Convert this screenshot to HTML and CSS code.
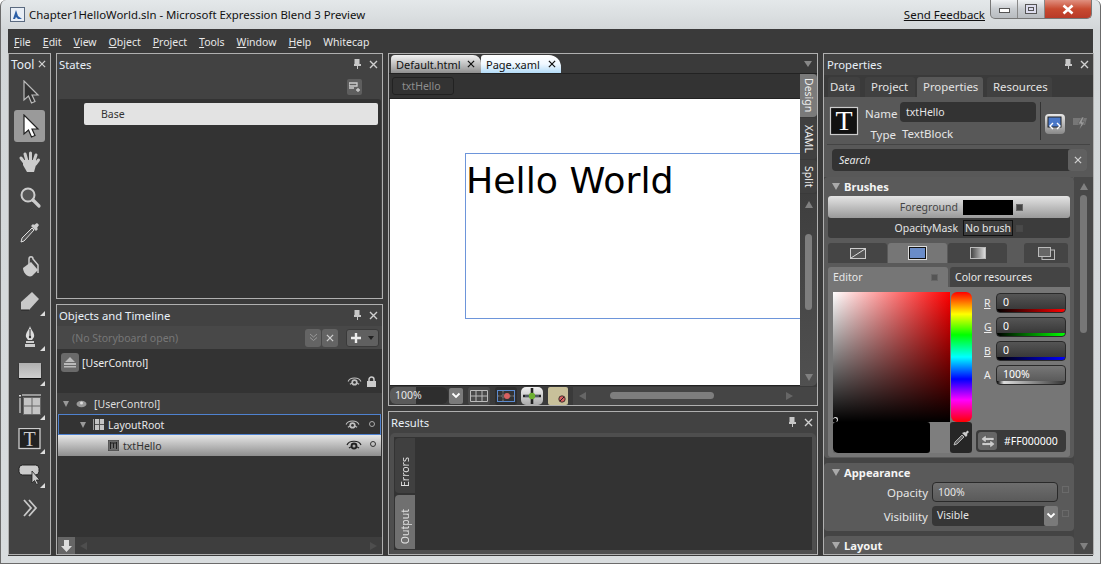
FILE: index.html
```html
<!DOCTYPE html>
<html lang="en">
<head>
    <meta charset="UTF-8">
    <title>Chapter1HelloWorld.sln - Microsoft Expression Blend 3 Preview</title>
    <link rel="stylesheet" href="styles.css">
</head>
<body>
    <svg class="defs" width="0" height="0">
        <symbol id="pin" viewBox="0 0 10 11"><path d="M2.5 0h5v5h1.5v2h-3v3h-1v-3h-3v-2h.5z" fill="#c8c8c8"/></symbol>
        <symbol id="close" viewBox="0 0 9 9"><path d="M1 1l7 7M8 1l-7 7" stroke="#d0d0d0" stroke-width="1.4" fill="none"/></symbol>
        <symbol id="eye" viewBox="0 0 16 12"><path d="M1 6c2-5 12-5 14 0M3 9c2-2 8-2 10 0" stroke="#c0c0c0" stroke-width="1.2" fill="none"/><circle cx="8" cy="7" r="3.4" fill="#c0c0c0"/><circle cx="8" cy="7" r="1.5" fill="#333"/></symbol>
        <symbol id="chev" viewBox="0 0 10 8"><path d="M1.5 1.5l3.5 3.5 3.5-3.5" stroke="#fff" stroke-width="1.8" fill="none"/></symbol>
    </svg>

    <div class="window">
        <!-- title bar -->
        <div class="titlebar">
            <svg class="app-icon" viewBox="0 0 15 15"><rect x=".5" y=".5" width="14" height="14" fill="#e8eef6" stroke="#5a6a80"/><path d="M3 12l3-9 2 6 4 3h-4l-2-2-1 2z" fill="#2a5fa8"/></svg>
            <span class="title">Chapter1HelloWorld.sln - Microsoft Expression Blend 3 Preview</span>
            <span class="feedback">Send Feedback</span>
            <div class="win-btns">
                <div class="win-btn"><span class="glyph-min"></span></div>
                <div class="win-btn"><span class="glyph-max"></span></div>
                <div class="win-btn win-close"><svg width="14" height="11" viewBox="0 0 14 11"><path d="M2.5 1.5l9 8M11.5 1.5l-9 8" stroke="#fff" stroke-width="2.6"/></svg></div>
            </div>
        </div>

        <div class="client">
            <!-- menu -->
            <div class="menubar">
                <span><u>F</u>ile</span>
                <span><u>E</u>dit</span>
                <span><u>V</u>iew</span>
                <span><u>O</u>bject</span>
                <span><u>P</u>roject</span>
                <span><u>T</u>ools</span>
                <span><u>W</u>indow</span>
                <span><u>H</u>elp</span>
                <span>Whitecap</span>
            </div>

            <div class="workspace">
                <!-- toolbox -->
                <div class="panel tool-panel">
                    <div class="tool-head">Tool <svg class="tool-x"><use href="#close"/></svg></div>
                    <div class="tool-btn">
                        <svg viewBox="0 1 24 24"><path d="M6 2v19l4.500-4 3 7 3.500-1.500-3-6.500h6z" fill="#333" stroke="#bbb" stroke-width="1.200"/></svg>
                    </div>
                    <div class="tool-btn tool-active">
                        <svg viewBox="0 1 24 24"><path d="M6 2v19l4.500-4 3 7 3.500-1.500-3-6.500h6z" fill="#fff" stroke="#222" stroke-width="1.200"/></svg>
                    </div>
                    <div class="tool-btn">
                        <svg viewBox="0 0 24 24"><path d="M6 12l-3-4M9 11l-2-7M12.500 10V3M16 11l2-6M17.500 14l3-4" stroke="#ccc" stroke-width="3" stroke-linecap="round" fill="none"/><path d="M5 10h13v5l-2 7H9l-4-7z" fill="#ccc"/></svg>
                    </div>
                    <div class="tool-btn">
                        <svg viewBox="0 0 24 24"><circle cx="10" cy="10" r="6.500" fill="#555" stroke="#ccc" stroke-width="2"/><path d="M15 15l6 6" stroke="#ccc" stroke-width="3.200" stroke-linecap="round"/></svg>
                    </div>
                    <div class="tool-btn">
                        <svg viewBox="0 0 24 24"><path d="M3 22l1-4L14 8l2 2L6 21z" fill="#555" stroke="#ddd"/><path d="M13 6l5 5 2-2-1-1 2-3-2-2-3 2-1-1z" fill="#ccc"/></svg>
                    </div>
                    <div class="tool-btn">
                        <svg viewBox="0 0 24 24"><path d="M5 13l8-6 7 8-6 6c-4 2-9-3-9-8z" fill="#ccc"/><path d="M11 10V4c0-3 4-3 4 0l5 6v8" stroke="#ccc" stroke-width="1.500" fill="none"/></svg>
                    </div>
                    <div class="tool-btn">
                        <svg viewBox="0 0 24 24"><path d="M14 2l7 7-10 11H3v-8z" fill="#c8c8c8"/><path d="M3 20h8" stroke="#222" stroke-width="1"/></svg>
                        <span class="corner"></span>
                    </div>
                    <div class="tool-btn">
                        <svg viewBox="0 0 24 24"><path d="M12 1c-1 4-5 7-4 11l2 3h4l2-3c1-4-3-7-4-11z" fill="#ddd"/><path d="M12 4v7" stroke="#333"/><circle cx="12" cy="12" r="1.200" fill="#333"/><path d="M8 16h8v2H8zM7 19h10v3H7z" fill="#ccc"/></svg>
                        <span class="corner"></span>
                    </div>
                    <div class="tool-btn">
                        <div class="rect-tool"></div>
                        <span class="corner"></span>
                    </div>
                    <div class="tool-btn tool-short">
                        <svg viewBox="0 2 24 24"><rect x="5" y="5" width="18" height="18" fill="#666"/><path d="M6 6h7.500v7.500H6zM14.500 6H22v7.500h-7.500zM6 14.500h7.500V22H6zM14.500 14.500H22V22h-7.500z" fill="#c4c4c4"/><path d="M4 3h19" stroke="#999" stroke-width="2"/><path d="M2 3v1.500" stroke="#ddd" stroke-width="2"/><path d="M2 6v15" stroke="#999" stroke-width="2"/></svg>
                        <span class="corner"></span>
                    </div>
                    <div class="tool-btn tool-short">
                        <svg viewBox="0 2 24 24"><rect x="1" y="2.500" width="21" height="20" fill="#222" stroke="#ccc" stroke-width="1.300"/><text x="11.500" y="19.500" text-anchor="middle" class="t-glyph">T</text></svg>
                        <span class="corner"></span>
                    </div>
                    <div class="tool-btn tool-short">
                        <svg viewBox="0 0 24 24"><rect x="1" y="3" width="20" height="10" rx="3.500" fill="#ccc" stroke="#222"/><path d="M14 9v12l2.500-2.500 2 4 1.800-1-2-3.500h3.500z" fill="#ccc" stroke="#222" stroke-width=".8"/></svg>
                        <span class="corner"></span>
                    </div>
                    <div class="tool-btn tool-short">
                        <svg viewBox="0 0 24 24"><path d="M6 4l7 8-7 8M11 4l7 8-7 8" stroke="#c8c8c8" stroke-width="1.800" fill="none"/></svg>
                    </div>
                </div>

                <div class="col-left">
                    <!-- states -->
                    <div class="panel states">
                        <div class="panel-head"><span class="head-text">States</span><svg class="pin"><use href="#pin"/></svg><svg class="x"><use href="#close"/></svg></div>
                        <div class="states-tools">
                            <div class="add-state"><svg width="11" height="11" viewBox="0 0 11 11"><path d="M0 1h8v3H0zM0 6h5M7 8h4M9 6v4" fill="none" stroke="#ccc" stroke-width="1.300"/></svg></div>
                        </div>
                        <div class="states-list">
                            <div class="state-row">Base</div>
                        </div>
                    </div>

                    <!-- objects and timeline -->
                    <div class="panel objects">
                        <div class="panel-head"><span class="head-text">Objects and Timeline</span><svg class="pin"><use href="#pin"/></svg><svg class="x"><use href="#close"/></svg></div>
                        <div class="storyboard">
                            <span class="sb-label">(No Storyboard open)</span>
                            <div class="sb-btn"><svg width="9" height="9" viewBox="0 0 9 9"><path d="M1 1l3.500 3 3.500-3M1 4.500l3.500 3 3.500-3" fill="none" stroke="#999"/></svg></div>
                            <div class="sb-btn"><svg width="8" height="8"><use href="#close"/></svg></div>
                            <div class="sb-add">
                                <svg width="10" height="10" viewBox="0 0 10 10"><path d="M5 0v10M0 5h10" stroke="#eee" stroke-width="2.400"/></svg>
                                <span class="sb-caret"></span>
                            </div>
                        </div>
                        <div class="scope">
                            <div class="scope-main">
                                <div class="scope-btn"><svg width="12" height="11" viewBox="0 0 12 11"><path d="M6 0l5 5H1zM0 6h12v2H0zM0 9h12v1.500H0z" fill="#bbb"/></svg></div>
                                <span>[UserControl]</span>
                            </div>
                            <div class="scope-icons">
                                <svg width="15" height="11"><use href="#eye"/></svg>
                                <svg width="11" height="11" viewBox="0 0 11 11"><path d="M3 5V3.500a2.500 2.500 0 0 1 5 0V5" stroke="#ccc" stroke-width="1.500" fill="none"/><rect x="1" y="5" width="9" height="6" fill="#ccc"/></svg>
                            </div>
                        </div>
                        <div class="tree">
                            <div class="tree-row tree-root">
                                <span class="tri"></span>
                                <svg class="root-ico" width="11" height="8" viewBox="0 0 11 8"><ellipse cx="5.500" cy="4" rx="5" ry="3.200" fill="#999"/><circle cx="5.500" cy="3" r="1.500" fill="#ddd"/></svg>
                                <span>[UserControl]</span>
                            </div>
                            <div class="tree-row tree-layout">
                                <span class="tri"></span>
                                <svg class="node-ico" width="11" height="11" viewBox="0 0 11 11"><rect x="2" width="9" height="11" fill="#c4c4c4"/><path d="M6.500 0v11M2 5.500h9" stroke="#555"/><path d="M.5 0v11" stroke="#999"/></svg>
                                <span>LayoutRoot</span>
                                <svg class="row-eye" width="15" height="11"><use href="#eye"/></svg>
                                <span class="dot"></span>
                            </div>
                            <div class="tree-row tree-sel">
                                <svg class="leaf-ico" width="11" height="11" viewBox="0 0 11 11"><rect width="11" height="11" fill="#6a6a6a" stroke="#444"/><path d="M3 3h5M5.500 3v5M2.500 2v7M8.500 2v7" stroke="#222"/></svg>
                                <span>txtHello</span>
                                <svg class="row-eye big-eye" width="16" height="12" viewBox="0 0 16 12"><path d="M1 6c2-5 12-5 14 0M3 9c2-2 8-2 10 0" stroke="#222" stroke-width="1.200" fill="none"/><circle cx="8" cy="7" r="3.400" fill="#222"/><circle cx="8" cy="7" r="1.500" fill="#aaa"/></svg>
                                <span class="dot dot-dark"></span>
                            </div>
                        </div>
                        <div class="obj-bottom">
                            <div class="down-btn"><svg width="11" height="12" viewBox="0 0 11 12"><path d="M3 0h5v6h3l-5.500 6L0 6h3z" fill="#ddd"/></svg></div>
                            <span class="arrow-l dim"></span>
                            <span class="grow"></span>
                            <span class="arrow-r dim"></span>
                        </div>
                    </div>
                </div>

                <div class="col-center">
                    <!-- document -->
                    <div class="panel doc">
                        <div class="doc-tabs">
                            <div class="doc-tab tab-plain">Default.html <svg><use href="#close"/></svg></div>
                            <div class="doc-tab tab-live">Page.xaml <svg><use href="#close"/></svg></div>
                            <span class="grow"></span>
                            <span class="tab-menu"></span>
                        </div>
                        <div class="doc-body">
                            <div class="doc-left">
                                <div class="crumbs"><span class="crumb">txtHello</span></div>
                                <div class="canvas">
                                    <div class="selection">Hello World</div>
                                </div>
                            </div>
                            <div class="view-strip">
                                <div class="view-tab view-on design"><span>Design</span></div>
                                <div class="view-tab xaml"><span>XAML</span></div>
                                <div class="view-tab split"><span>Split</span></div>
                                <div class="vscroll">
                                    <span class="arrow-u"></span>
                                    <span class="vthumb"></span>
                                    <span class="arrow-d"></span>
                                </div>
                            </div>
                        </div>
                        <div class="doc-status">
                            <div class="zoom-box">100%</div>
                            <div class="combo-btn"><svg width="10" height="8"><use href="#chev"/></svg></div>
                            <div class="st-btn"><svg width="18" height="12" viewBox="0 0 18 12"><path d="M.5.500h17v11H.5zM6 .5v11M12 .5v11M.5 6h17" fill="none" stroke="#bbb"/></svg></div>
                            <div class="st-btn st-second"><svg width="18" height="12" viewBox="0 0 18 12"><rect x=".5" y=".5" width="17" height="11" fill="#333" stroke="#5a8ad0"/><path d="M6 .5v11M.5 6h17" stroke="#888" stroke-dasharray="2 1"/><circle cx="10" cy="6" r="3" fill="#d86060"/></svg></div>
                            <div class="st-btn st-snap"><svg width="18" height="16" viewBox="0 0 18 16"><path d="M9 0v16M0 8h18" stroke="#222" stroke-width="2.600"/><path d="M2 8h14" stroke="#8090a8"/><circle cx="9" cy="8" r="3.200" fill="#6cb030"/></svg></div>
                            <div class="st-btn st-tan"><svg class="no-ico" width="8" height="8" viewBox="0 0 8 8"><circle cx="4" cy="4" r="3.200" fill="#d86060" stroke="#222" stroke-width=".8"/><path d="M2 6l4-4" stroke="#222"/></svg></div>
                            <div class="hscroll">
                                <span class="arrow-l"></span>
                                <span class="hthumb"></span>
                                <span class="grow"></span>
                                <span class="arrow-r"></span>
                            </div>
                        </div>
                    </div>

                    <!-- results -->
                    <div class="panel results">
                        <div class="panel-head"><span class="head-text">Results</span><svg class="pin"><use href="#pin"/></svg><svg class="x"><use href="#close"/></svg></div>
                        <div class="results-frame">
                            <div class="results-inner">
                                <div class="res-tabs">
                                    <div class="res-tab"><span>Errors</span></div>
                                    <div class="res-tab res-on"><span>Output</span></div>
                                </div>
                            </div>
                        </div>
                    </div>
                </div>

                <!-- properties -->
                <div class="panel props">
                    <div class="panel-head"><span class="head-text">Properties</span><svg class="pin"><use href="#pin"/></svg><svg class="x"><use href="#close"/></svg></div>
                    <div class="prop-tabs">
                        <span class="prop-tab tab-data">Data</span>
                        <span class="prop-tab tab-project">Project</span>
                        <span class="prop-tab prop-on">Properties</span>
                        <span class="prop-tab tab-res">Resources</span>
                    </div>
                    <div class="prop-body">
                        <div class="identity">
                            <svg class="type-ico" viewBox="0 0 30 30"><rect x="1.500" y="1.500" width="27" height="27" fill="#111" stroke="#ccc" stroke-width="1.200"/><text x="15" y="24" text-anchor="middle" class="t-glyph-big">T</text></svg>
                            <div class="id-grid">
                                <span class="id-label">Name</span>
                                <span class="name-box">txtHello</span>
                                <span class="id-label">Type</span>
                                <span class="type-val">TextBlock</span>
                            </div>
                            <div class="id-actions">
                                <div class="act-on"><svg width="16" height="15" viewBox="0 0 16 15"><rect x="1" y="1" width="13" height="10" fill="#4a78c8" stroke="#222"/><path d="M6 7l-3 3 3 3M10 7l3 3-3 3" stroke="#fff" stroke-width="1.400" fill="none"/></svg></div>
                                <div class="act-off"><svg width="16" height="15" viewBox="0 0 16 15"><path d="M1 2h14l-2 7H1z" fill="#777"/><path d="M10 1L6 8h3l-2 6 6-8h-3l2-5z" fill="#999" stroke="#555" stroke-width=".6"/></svg></div>
                            </div>
                        </div>
                        <div class="search">
                            <span class="search-text">Search</span>
                            <div class="search-x"><svg width="8" height="8"><use href="#close"/></svg></div>
                        </div>
                        <div class="prop-scroll">
                            <div class="sections">
                                <div class="section brushes">
                                    <div class="sec-head"><span class="sec-tri"></span>Brushes</div>
                                    <div class="brush-list">
                                        <div class="brush-row brush-on">
                                            <span class="brush-label">Foreground</span>
                                            <span class="brush-swatch"></span>
                                            <span class="brush-mark"></span>
                                        </div>
                                        <div class="brush-row">
                                            <span class="brush-label">OpacityMask</span>
                                            <span class="brush-swatch swatch-none">No brush</span>
                                            <span class="brush-mark mark-dim"></span>
                                        </div>
                                    </div>
                                    <div class="brush-types">
                                        <div class="btype"><svg width="16" height="11" viewBox="0 0 16 11"><rect x=".5" y=".5" width="15" height="10" fill="#555" stroke="#ccc"/><path d="M1 10L15 1" stroke="#ddd"/></svg></div>
                                        <div class="btype btype-on"><span class="solid-ico"></span></div>
                                        <div class="btype"><span class="grad-ico"></span></div>
                                        <div class="btype btype-res"><svg width="17" height="13" viewBox="0 0 17 13"><rect x="4" y="3" width="12.500" height="9.500" fill="none" stroke="#bbb"/><rect x=".5" y=".5" width="12" height="9" fill="#666" stroke="#bbb"/></svg></div>
                                    </div>
                                    <div class="editor">
                                        <div class="ed-tabs">
                                            <div class="ed-tab ed-on">Editor<span class="ed-mark"></span></div>
                                            <div class="ed-tab">Color resources</div>
                                        </div>
                                        <div class="ed-body">
                                            <div class="picker">
                                                <div class="pick-top">
                                                    <div class="sat"><span class="sat-mark"></span></div>
                                                    <div class="hue"></div>
                                                </div>
                                                <div class="pick-bottom">
                                                    <div class="now"></div>
                                                    <div class="old"></div>
                                                    <div class="dropper"><svg width="17" height="17" viewBox="0 0 17 17"><path d="M1 16l1-3 7-7 2 2-7 7z" fill="#666" stroke="#ccc" stroke-width=".8"/><path d="M9 4l4 4 1.500-2-.5-1 2-2-1.500-1.500-2 2-1-.5z" fill="#ccc"/></svg></div>
                                                </div>
                                            </div>
                                            <div class="channels">
                                                <div class="chan"><u>R</u><div class="chan-box ch-r">0</div></div>
                                                <div class="chan"><u>G</u><div class="chan-box ch-g">0</div></div>
                                                <div class="chan"><u>B</u><div class="chan-box ch-b">0</div></div>
                                                <div class="chan"><span>A</span><div class="chan-box ch-a">100%</div></div>
                                                <span class="grow"></span>
                                                <div class="hex">
                                                    <div class="hex-btn"><svg width="14" height="13" viewBox="0 0 14 13"><path d="M5 0L0 4l5 4V5.500h8v-3H5zM9 5l5 4-5 4v-2.500H1v-3h8z" fill="#ccc" stroke="#444" stroke-width=".5"/></svg></div>
                                                    <span>#FF000000</span>
                                                </div>
                                            </div>
                                        </div>
                                    </div>
                                </div>
                                <div class="section appearance">
                                    <div class="sec-head"><span class="sec-tri"></span>Appearance</div>
                                    <div class="field">
                                        <span class="field-label">Opacity</span>
                                        <div class="num-box">100%</div>
                                        <span class="field-mark"></span>
                                    </div>
                                    <div class="field">
                                        <span class="field-label">Visibility</span>
                                        <div class="sel-box">Visible<div class="combo-btn sel-btn"><svg width="10" height="8"><use href="#chev"/></svg></div></div>
                                        <span class="field-mark"></span>
                                    </div>
                                </div>
                                <div class="section layout">
                                    <div class="sec-head"><span class="sec-tri"></span>Layout</div>
                                </div>
                            </div>
                            <div class="prop-bar">
                                <span class="arrow-u"></span>
                                <span class="pthumb"></span>
                                <span class="arrow-d"></span>
                            </div>
                        </div>
                    </div>
                </div>
            </div>
        </div>
    </div>
</body>
</html>
```

FILE: styles.css
```css
* {
    margin: 0;
    padding: 0;
    box-sizing: border-box;
    font-family: "Noto Sans", "Open Sans", sans-serif;
}

body {
    width: 1101px;
    height: 564px;
    overflow: hidden;
    font-size: 10.5px;
    color: #e6e6e6;
}

.defs {
    position: absolute;
}

svg {
    display: block;
    flex: none;
}

u {
    text-decoration: underline;
}

.grow {
    flex: 1;
}

.window {
    width: 1101px;
    height: 564px;
    display: flex;
    flex-direction: column;
    padding: 0 8px 7px;
    background: linear-gradient(to bottom, #e4e8ea, #d2d6d8 30px, #d8dcde);
    border: 1px solid #6b6b6b;
    border-top: none;
    border-radius: 6px 6px 0 0;
}

/* title bar */
.titlebar {
    height: 29px;
    display: flex;
    align-items: center;
    color: #111;
    font-size: 11.4px;
    flex: none;
}

.app-icon {
    width: 15px;
    height: 15px;
    margin-left: 1px;
}

.title {
    margin-left: 4px;
}

.feedback {
    margin-left: auto;
    margin-right: 5px;
    text-decoration: underline;
    font-size: 11.500px;
}

.win-btns {
    display: flex;
    align-self: flex-start;
    height: 19px;
    border: 1px solid #777;
    border-top: none;
    border-radius: 0 0 5px 5px;
    overflow: hidden;
    background: linear-gradient(to bottom, #f0f2f4, #c8ccd0 50%, #b8bcc0);
}

.win-btn {
    width: 27px;
    display: flex;
    align-items: center;
    justify-content: center;
    border-right: 1px solid #888;
}

.win-close {
    width: 46px;
    border-right: none;
    background: linear-gradient(to bottom, #e09080, #c84a30 50%, #b83a28);
}

.glyph-min {
    width: 11px;
    height: 5px;
    margin-top: 3px;
    background: #fff;
    border: 1px solid #555;
}

.glyph-max {
    width: 12px;
    height: 10px;
    border: 1px solid #555;
    background: #dde;
    box-shadow: inset 0 0 0 2px #dde, inset 0 0 0 3px #555;
}

/* main dark area */
.client {
    flex: 1;
    min-height: 0;
    display: flex;
    flex-direction: column;
    background: #3a3a3a;
    margin-right: -1px;
    margin-left: -1px;
}

.menubar {
    height: 24px;
    flex: none;
    display: flex;
    align-items: center;
    padding: 2px 0 0 6px;
    color: #e8e8e8;
}

.menubar span {
    margin-right: 12px;
}

.workspace {
    flex: 1;
    display: flex;
    gap: 5px;
    min-height: 0;
    padding-bottom: 1px;
}

.panel {
    border: 1px solid #b0b0b0;
    background: #424242;
    display: flex;
    flex-direction: column;
    min-height: 0;
}

.panel-head {
    height: 21px;
    flex: none;
    display: flex;
    align-items: center;
    padding: 0 4px 0 2px;
    font-size: 11.3px;
    color: #e8f0f8;
}

.head-text {
    flex: 1;
}

.pin {
    width: 10px;
    height: 11px;
    margin-right: 7px;
}

.x {
    width: 9px;
    height: 9px;
}

/* toolbox */
.tool-panel {
    width: 43px;
    flex: none;
}

.tool-head {
    height: 20px;
    display: flex;
    align-items: center;
    padding-left: 2px;
    font-size: 12px;
    color: #e8f0f8;
    flex: none;
}

.tool-x {
    width: 8px;
    height: 8px;
    margin-left: 4px;
}

.tool-btn {
    height: 35px;
    flex: none;
    display: flex;
    align-items: center;
    justify-content: center;
    position: relative;
}

.tool-short {
    height: 34px;
}

.tool-btn svg {
    width: 24px;
    height: 24px;
}

.tool-active {
    background: #9a9a9a;
    border-radius: 3px;
    margin: 1px 5px 2px;
    height: 32px;
}

.corner {
    position: absolute;
    right: 5px;
    bottom: 3px;
    border-left: 5px solid transparent;
    border-bottom: 5px solid #ddd;
}

.rect-tool {
    width: 22px;
    height: 15px;
    margin-top: -2px;
    background: linear-gradient(to bottom, #b0b0b0, #cfcfcf);
    box-shadow: 0 1px 1px #111;
}

.t-glyph {
    font-family: "Liberation Serif", serif;
    font-size: 20px;
    fill: #ccc;
}

.t-glyph-big {
    font-family: "Liberation Serif", serif;
    font-size: 28px;
    fill: #fff;
}

.col-left {
    width: 327px;
    flex: none;
    display: flex;
    flex-direction: column;
    gap: 5px;
}

/* states */
.states {
    height: 246px;
    flex: none;
}

.states-tools {
    height: 24px;
    flex: none;
    display: flex;
    justify-content: flex-end;
    align-items: center;
    padding-right: 20px;
}

.add-state {
    width: 15px;
    height: 16px;
    background: #5e5e5e;
    border-radius: 2px;
    display: flex;
    align-items: center;
    justify-content: center;
}

.states-list {
    flex: 1;
    background: #333;
    border-radius: 3px 3px 0 0;
    margin: 0 1px;
    padding: 4px 3px 0 26px;
}

.state-row {
    height: 22px;
    background: #e3e3e3;
    border-radius: 2px;
    color: #333;
    line-height: 22px;
    padding-left: 17px;
}

/* objects and timeline */
.objects {
    flex: 1;
}

.storyboard {
    height: 23px;
    flex: none;
    display: flex;
    align-items: center;
    padding: 0 3px 0 15px;
    background: #484848;
}

.sb-label {
    flex: 1;
    color: #777;
}

.sb-btn {
    width: 16px;
    height: 18px;
    background: #646464;
    border-radius: 3px;
    margin-right: 1px;
    display: flex;
    align-items: center;
    justify-content: center;
}

.sb-add {
    width: 33px;
    height: 18px;
    margin-left: 7px;
    background: #606060;
    border: 1px solid #3a3a3a;
    border-radius: 3px;
    display: flex;
    align-items: center;
    justify-content: space-between;
    padding: 0 4px;
}

.sb-caret {
    border: 3px solid transparent;
    border-top: 4px solid #222;
    border-bottom: none;
}

.scope {
    height: 44px;
    flex: none;
    background: #333;
    padding: 4px 5px 0 4px;
}

.scope-main {
    display: flex;
    align-items: center;
    gap: 3px;
    color: #eee;
}

.scope-btn {
    width: 18px;
    height: 19px;
    background: #6a6a6a;
    border-radius: 3px;
    display: flex;
    align-items: center;
    justify-content: center;
}

.scope-icons {
    display: flex;
    justify-content: flex-end;
    gap: 4px;
    margin-top: 4px;
}

.tree {
    height: 144px;
    flex: none;
    background: #333;
}

.tree-row {
    height: 21px;
    display: flex;
    align-items: center;
    position: relative;
}

.tree-root {
    background: #3e3e3e;
    padding-left: 6px;
    color: #ddd;
}

.tree-layout {
    border: 1px solid #4f82d0;
    margin: 0 1px;
    padding-left: 21px;
    color: #e8e8e8;
}

.tree-sel {
    background: linear-gradient(to bottom, #e6e6e6, #8e8e8e);
    margin: 0 1px;
    padding-left: 50px;
    color: #333;
}

.tri {
    width: 0;
    height: 0;
    border-left: 3px solid transparent;
    border-right: 3px solid transparent;
    border-top: 6px solid #999;
}

.root-ico {
    margin: 0 7px;
}

.node-ico {
    margin: 0 4px 0 7px;
}

.leaf-ico {
    margin-right: 4px;
}

.row-eye {
    position: absolute;
    right: 20px;
    top: 4px;
}

.big-eye {
    right: 19px;
}

.dot {
    position: absolute;
    right: 5px;
    top: 6px;
    width: 6px;
    height: 6px;
    border: 1px solid #aaa;
    border-radius: 50%;
}

.dot-dark {
    border-color: #333;
}

.obj-bottom {
    flex: 1;
    display: flex;
    align-items: center;
    background: #3e3e3e;
    padding-right: 5px;
}

.down-btn {
    width: 17px;
    height: 17px;
    margin-left: 1px;
    background: #666;
    display: flex;
    align-items: center;
    justify-content: center;
}

.arrow-l,
.arrow-r {
    border: 4px solid transparent;
    border-left: none;
    border-right: 7px solid #666;
}

.arrow-r {
    border-left: 7px solid #666;
    border-right: none;
}

.arrow-l.dim {
    margin-left: 5px;
    border-right-color: #4e4e4e;
}

.arrow-r.dim {
    border-left-color: #4e4e4e;
}

.arrow-u,
.arrow-d {
    flex: none;
    border: 4px solid transparent;
    border-top: none;
    border-bottom: 7px solid #808080;
}

.arrow-d {
    border-bottom: none;
    border-top: 7px solid #808080;
}

/* document */
.col-center {
    width: 430px;
    flex: none;
    display: flex;
    flex-direction: column;
    gap: 5px;
}

.doc {
    height: 353px;
    flex: none;
    background: #3a3a3a;
}

.doc-tabs {
    height: 19px;
    flex: none;
    display: flex;
    align-items: flex-end;
    padding: 0 5px 0 2px;
}

.doc-tab {
    height: 18px;
    display: flex;
    align-items: center;
    gap: 6px;
    color: #111;
    font-size: 11px;
    padding: 0 3px 0 5px;
}

.doc-tab svg {
    width: 8px;
    height: 8px;
    filter: invert(1) brightness(.4);
}

.tab-plain {
    width: 90px;
    background: linear-gradient(to bottom, #f2f2f2, #b8b8b8 60%, #909090);
    border-radius: 4px 8px 0 0;
}

.tab-live {
    width: 80px;
    gap: 8px;
    background: linear-gradient(to bottom, #fff, #f0f8ff 50%, #b4dcf8);
    border-radius: 3px 12px 0 0;
}

.tab-menu {
    align-self: center;
    border: 4px solid transparent;
    border-top: 6px solid #888;
    border-bottom: none;
}

.doc-body {
    flex: 1;
    display: flex;
    min-height: 0;
    border-top: 1px solid #222;
}

.doc-left {
    width: 411px;
    flex: none;
    display: flex;
    flex-direction: column;
    padding-left: 1px;
}

.crumbs {
    height: 25px;
    flex: none;
    background: #333;
    padding: 3px 0 0 3px;
    border-bottom: 1px solid #222;
    margin-left: -1px;
}

.crumb {
    display: block;
    width: 62px;
    height: 18px;
    line-height: 16px;
    border: 1px solid #222;
    border-radius: 3px;
    padding-left: 9px;
    color: #8e8e8e;
}

.canvas {
    flex: 1;
    background: #fff;
    position: relative;
    border-bottom: 1px solid #222;
}

.selection {
    position: absolute;
    left: 75px;
    top: 54px;
    right: 0;
    height: 166px;
    border: 1px solid #6d95da;
    border-right: none;
    font-family: "DejaVu Sans", sans-serif;
    font-size: 36.3px;
    line-height: 53px;
    color: #000;
}

.view-strip {
    flex: 1;
    display: flex;
    flex-direction: column;
}

.view-tab {
    flex: none;
    display: flex;
    align-items: center;
    justify-content: center;
    border-radius: 0 4px 4px 0;
    background: #404040;
    margin-bottom: 1px;
    color: #eee;
}

.view-tab span {
    writing-mode: vertical-rl;
}

.design {
    height: 43px;
}

.xaml {
    height: 41px;
}

.split {
    height: 33px;
}

.view-on {
    background: #7a7a7a;
}

.vscroll {
    flex: 1;
    display: flex;
    flex-direction: column;
    align-items: center;
    background: linear-gradient(to bottom, #3e3e3e, #505050);
    padding-top: 7px;
    border-radius: 0 0 5px 0;
}

.vthumb {
    width: 7px;
    height: 76px;
    margin-top: 26px;
    margin-bottom: auto;
    background: #7e7e7e;
    border-radius: 4px;
}

.vscroll .arrow-d {
    margin-bottom: 5px;
}

.doc-status {
    height: 19px;
    flex: none;
    display: flex;
    align-items: center;
    padding-left: 1px;
}

.zoom-box {
    width: 58px;
    height: 17px;
    background: linear-gradient(to right, #5a5a5a 26px, #2e2e2e 26px);
    border-radius: 6px;
    padding-left: 5px;
    line-height: 16px;
    color: #e8e8e8;
}

.combo-btn {
    width: 14px;
    height: 16px;
    margin-left: 1px;
    background: #7a7a7a;
    border-radius: 2px;
    display: flex;
    align-items: center;
    justify-content: center;
}

.st-btn {
    width: 22px;
    height: 18px;
    margin-left: 5px;
    background: #4a4a4a;
    border-radius: 3px;
    display: flex;
    align-items: center;
    justify-content: center;
}

.st-second {
    background: #2e2e2e;
}

.st-snap {
    margin-left: 4px;
    background: linear-gradient(to bottom, #f0f0f0, #aaa);
    border-radius: 5px;
}

.st-tan {
    width: 20px;
    background: #c8c09a;
    border-radius: 2px;
    align-items: flex-end;
    justify-content: flex-end;
    padding: 0 2px 2px 0;
}

.hscroll {
    flex: 1;
    height: 18px;
    margin-left: 5px;
    background: #454545;
    display: flex;
    align-items: center;
    padding: 0 24px 0 6px;
}

.hthumb {
    width: 104px;
    height: 7px;
    margin-left: 24px;
    background: #7e7e7e;
    border-radius: 4px;
}

/* results */
.results {
    flex: 1;
}

.results-frame {
    flex: 1;
    display: flex;
    min-height: 0;
    background: #4e4e4e;
    border-radius: 5px 5px 0 0;
    margin: 0 1px;
    padding: 4px;
}

.results-inner {
    flex: 1;
    display: flex;
    background: #333;
    padding: 1px;
}

.res-tabs {
    width: 20px;
    display: flex;
    flex-direction: column;
    gap: 2px;
}

.res-tab {
    flex: 1;
    display: flex;
    align-items: flex-end;
    justify-content: center;
    background: #404040;
    border-radius: 4px 0 0 4px;
    padding-bottom: 5px;
    color: #e0e0e0;
}

.res-tab span {
    writing-mode: vertical-rl;
    transform: rotate(180deg);
}

.res-on {
    background: #707070;
}

/* properties */
.props {
    flex: 1;
}

.props .panel-head {
    padding-left: 3px;
}

.prop-tabs {
    height: 22px;
    flex: none;
    display: flex;
    align-items: flex-end;
    padding-left: 4px;
    background: #3a3a3a;
    font-size: 11.4px;
    color: #e4e4e4;
}

.prop-tab {
    height: 20px;
    line-height: 19px;
    padding-left: 2px;
    border-radius: 3px 3px 0 0;
    background: #404040;
}

.tab-data {
    width: 32px;
    margin-right: 5px;
}

.tab-project {
    width: 50px;
    padding-left: 6px;
    margin-right: 2px;
}

.prop-on {
    width: 66px;
    padding-left: 6px;
    background: #585858;
    margin-right: 4px;
}

.tab-res {
    width: 65px;
    padding-left: 6px;
}

.prop-body {
    flex: 1;
    display: flex;
    flex-direction: column;
    background: #585858;
    min-height: 0;
}

.identity {
    height: 48px;
    flex: none;
    display: flex;
    margin: 0 3px;
    border-bottom: 1px solid #444;
    padding: 5px 0 0 2px;
}

.type-ico {
    width: 30px;
    height: 30px;
    margin-top: 4px;
}

.id-grid {
    display: grid;
    grid-template-columns: 35px 136px;
    grid-template-rows: 20px 22px;
    margin-left: 6px;
    align-items: center;
    font-size: 11.5px;
}

.id-label {
    text-align: right;
    padding-right: 4px;
    padding-top: 2px;
}

.name-box {
    height: 20px;
    line-height: 20px;
    background: #333;
    border-radius: 4px;
    padding-left: 6px;
    font-size: 10.5px;
}

.type-val {
    padding-left: 2px;
}

.id-actions {
    display: flex;
    gap: 5px;
    align-items: center;
    border-left: 1px solid #333;
    margin-left: 4px;
    padding-left: 4px;
    height: 38px;
    padding-top: 5px;
}

.act-on {
    width: 20px;
    height: 20px;
    background: linear-gradient(to bottom, #e8e8e8, #888);
    border-radius: 4px;
    display: flex;
    align-items: center;
    justify-content: center;
}

.act-off {
    width: 20px;
    height: 20px;
    display: flex;
    align-items: center;
    justify-content: center;
}

.search {
    height: 22px;
    flex: none;
    margin: 4px 6px 0 8px;
    background: #333;
    border-radius: 4px;
    display: flex;
    align-items: center;
    justify-content: space-between;
    padding-left: 7px;
}

.search-text {
    font-style: italic;
    color: #e8e8e8;
}

.search-x {
    width: 19px;
    height: 22px;
    background: #606060;
    border-radius: 3px;
    display: flex;
    align-items: center;
    justify-content: center;
}

.prop-scroll {
    flex: 1;
    display: flex;
    margin-top: 6px;
    min-height: 0;
}

.sections {
    width: 250px;
    flex: none;
    display: flex;
    flex-direction: column;
    gap: 5px;
    background: #444;
    overflow: hidden;
    border-radius: 0 4px 0 0;
}

.section {
    background: #5a5a5a;
    border-radius: 4px;
    flex: none;
}

.brushes {
    height: 281px;
    padding: 0 4px;
}

.appearance {
    height: 68px;
}

.layout {
    height: 30px;
}

.sec-head {
    height: 19px;
    display: flex;
    align-items: center;
    padding-left: 8px;
    font-size: 11.2px;
    font-weight: bold;
    color: #f4f4f4;
}

.brushes .sec-head {
    margin-left: -4px;
}

.sec-tri {
    width: 0;
    height: 0;
    margin-right: 4px;
    border-left: 4px solid transparent;
    border-right: 4px solid transparent;
    border-top: 7px solid #aaa;
}

.brush-list {
    background: #3c3c3c;
    border-radius: 3px;
}

.brush-row {
    height: 20px;
    display: flex;
    align-items: center;
    border-radius: 3px;
    color: #e4e4e4;
}

.brush-on {
    height: 22px;
    background: linear-gradient(to bottom, #e4e4e4, #9a9a9a);
    color: #444;
}

.brush-label {
    width: 130px;
    text-align: right;
}

.brush-swatch {
    width: 50px;
    height: 15px;
    margin-left: 5px;
    background: #000;
    line-height: 14px;
    text-align: center;
    color: #e8e8e8;
    white-space: nowrap;
}

.swatch-none {
    background: #3c3c3c;
    border: 1px solid #111;
    height: 16px;
}

.brush-mark {
    width: 7px;
    height: 7px;
    margin-left: 3px;
    background: #444;
    border: 1px solid #666;
}

.mark-dim {
    background: #4a4a4a;
    border-color: #484848;
}

.brush-types {
    display: flex;
    margin-top: 5px;
    height: 20px;
}

.btype {
    width: 59px;
    margin-right: 1px;
    background: #454545;
    border-radius: 3px 3px 0 0;
    display: flex;
    align-items: center;
    justify-content: center;
}

.btype-on {
    background: #767676;
}

.btype-res {
    width: 44px;
    margin-left: 16px;
    margin-right: 0;
}

.solid-ico {
    width: 17px;
    height: 12px;
    background: #6a8cc8;
    border: 1px solid #111;
    box-shadow: 0 0 0 1px #ddd;
}

.grad-ico {
    width: 16px;
    height: 12px;
    background: linear-gradient(to right, #444, #ddd);
    border: 1px solid #bbb;
}

.editor {
    margin-top: 4px;
    background: #767676;
    border-radius: 3px;
}

.ed-tabs {
    display: flex;
    height: 20px;
    gap: 2px;
    background: #5a5a5a;
}

.ed-tab {
    flex: 1;
    display: flex;
    align-items: center;
    justify-content: space-between;
    padding: 0 5px;
    background: #444;
    border-radius: 3px 3px 0 0;
    color: #e8e8e8;
}

.ed-on {
    background: #767676;
}

.ed-mark {
    width: 7px;
    height: 7px;
    margin-right: 5px;
    background: #555;
    border: 1px solid #666;
}

.ed-body {
    height: 170px;
    display: flex;
    padding: 5px 4px 4px 5px;
}

.picker {
    width: 139px;
    flex: none;
    display: flex;
    flex-direction: column;
    background: #222;
    border-radius: 0 0 3px 3px;
    overflow: hidden;
}

.pick-top {
    height: 130px;
    display: flex;
    gap: 1px;
    flex: none;
    background: #777;
}

.sat {
    width: 117px;
    flex: none;
    position: relative;
    background: linear-gradient(to top, #000, rgba(0, 0, 0, 0)), linear-gradient(to right, #fff, #f00);
}

.sat-mark {
    position: absolute;
    left: 0;
    bottom: 0;
    width: 5px;
    height: 5px;
    border: 1px solid #ddd;
    border-radius: 50%;
    border-left: none;
    border-bottom: none;
}

.hue {
    flex: 1;
    border-radius: 6px;
    background: linear-gradient(to bottom, #f00, #ff0 17%, #0f0 33%, #0ff 50%, #00f 67%, #f0f 83%, #f00);
}

.pick-bottom {
    flex: 1;
    display: flex;
    background: #767676;
}

.now {
    width: 97px;
    background: #000;
    border-radius: 3px 3px 3px 5px;
}

.old {
    width: 20px;
    background: #7e7e7e;
}

.dropper {
    flex: 1;
    background: #262626;
    display: flex;
    align-items: center;
    justify-content: center;
    border-radius: 3px;
}

.channels {
    flex: 1;
    display: flex;
    flex-direction: column;
    gap: 4px;
    padding: 1px 0 0 4px;
}

.chan {
    height: 20px;
    display: flex;
    align-items: center;
    justify-content: space-between;
    padding-left: 8px;
    color: #eee;
}

.chan-box {
    width: 70px;
    height: 20px;
    padding-left: 6px;
    line-height: 16px;
    border: 1px solid #2a2a2a;
    border-radius: 4px;
    color: #fff;
}

.ch-r {
    background: linear-gradient(to right, #000, #f00) bottom / 100% 3px no-repeat, linear-gradient(to bottom, #555, #333);
}

.ch-g {
    background: linear-gradient(to right, #000, #0f0) bottom / 100% 3px no-repeat, linear-gradient(to bottom, #555, #333);
}

.ch-b {
    background: linear-gradient(to right, #000, #00f) bottom / 100% 3px no-repeat, linear-gradient(to bottom, #555, #333);
}

.ch-a {
    background: linear-gradient(to right, #000, #ddd 10%, #333) bottom / 100% 3px no-repeat, linear-gradient(to bottom, #777, #555);
}

.hex {
    height: 22px;
    display: flex;
    align-items: center;
    background: #3a3a3a;
    border-radius: 4px;
    color: #fff;
    margin-bottom: 1px;
}

.hex-btn {
    width: 19px;
    height: 18px;
    margin: 0 7px 0 2px;
    background: #666;
    border-radius: 3px;
    display: flex;
    align-items: center;
    justify-content: center;
}

.field {
    height: 24px;
    display: flex;
    align-items: flex-start;
    font-size: 11.5px;
}

.field-label {
    width: 108px;
    line-height: 22px;
    text-align: right;
    padding-right: 4px;
}

.num-box {
    width: 126px;
    height: 20px;
    padding-left: 5px;
    line-height: 18px;
    font-size: 10.5px;
    border: 1px solid #2a2a2a;
    border-radius: 4px;
    background: linear-gradient(to bottom, #6e6e6e, #5a5a5a);
}

.sel-box {
    width: 126px;
    height: 20px;
    padding-left: 5px;
    line-height: 19px;
    font-size: 10.5px;
    border-radius: 4px;
    background: #363636;
    display: flex;
    justify-content: space-between;
}

.sel-btn {
    width: 14px;
    height: 20px;
}

.field-mark {
    width: 7px;
    height: 7px;
    margin-left: 4px;
    margin-top: 4px;
    border: 1px solid #6a6a6a;
}

.prop-bar {
    flex: 1;
    display: flex;
    flex-direction: column;
    align-items: center;
    background: #484848;
    padding: 6px 0 4px;
}

.pthumb {
    width: 7px;
    height: 138px;
    margin-top: 5px;
    margin-bottom: auto;
    background: #777;
    border-radius: 4px;
}
```
